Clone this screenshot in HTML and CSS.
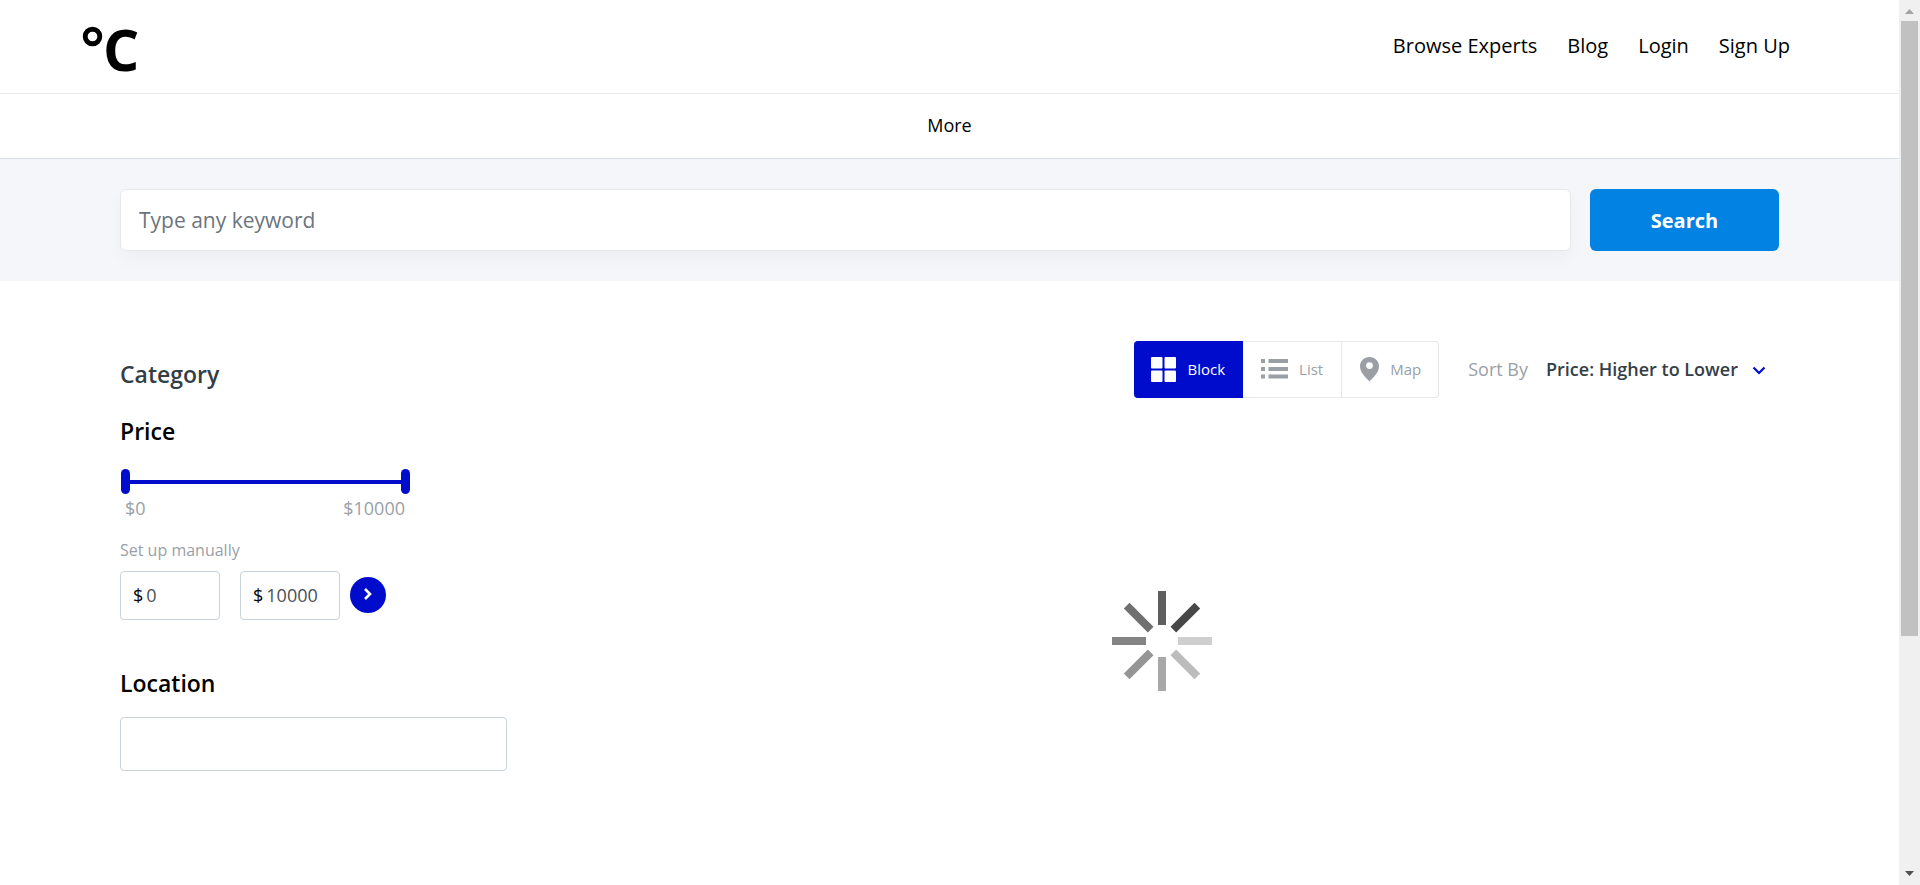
FILE: index.html
```html
<!DOCTYPE html>
<html lang="en">
<head>
<meta charset="utf-8">
<title>Browse Experts</title>
<link rel="stylesheet" href="styles.css">
</head>
<body>
<div class="viewport">
  <div class="page">
    <header class="header">
      <a class="logo" href="#" aria-label="°C">
        <svg width="23" height="25" viewBox="0 0 23 25"><circle cx="12.500" cy="12.500" r="7.300" fill="none" stroke="#000" stroke-width="4.900"/></svg>
        <span>C</span>
      </a>
      <nav class="nav">
        <a href="#">Browse Experts</a>
        <a href="#">Blog</a>
        <a href="#">Login</a>
        <a href="#">Sign Up</a>
      </nav>
    </header>
    <nav class="subnav"><a href="#">More</a></nav>
    <form class="search">
      <input class="search-input" type="text" placeholder="Type any keyword" aria-label="Keyword">
      <button class="search-button" type="button">Search</button>
    </form>
    <main class="content">
      <aside class="filters">
        <h2 class="title title-muted">Category</h2>
        <h2 class="title">Price</h2>
        <div class="slider">
          <input type="range" min="0" max="10000" value="0" aria-label="Minimum price">
          <input type="range" min="0" max="10000" value="10000" aria-label="Maximum price">
        </div>
        <div class="slider-labels"><span>$0</span><span>$10000</span></div>
        <p class="hint">Set up manually</p>
        <div class="manual">
          <label class="amount"><span>$</span><input type="text" value="0" aria-label="Price from"></label>
          <label class="amount"><span>$</span><input type="text" value="10000" aria-label="Price to"></label>
          <button class="apply" type="button" aria-label="Apply price">
            <svg width="10" height="14" viewBox="0 0 10 14"><path d="M2 2l5 5-5 5" fill="none" stroke="#fff" stroke-width="2.600"/></svg>
          </button>
        </div>
        <label class="title title-location" for="location">Location</label>
        <input class="location" id="location" type="text">
      </aside>
      <section class="results">
        <div class="toolbar">
          <div class="views">
            <button class="view view-active" type="button">
              <svg width="25" height="25" viewBox="0 0 25 25" fill="currentColor"><rect width="11.500" height="11.500" rx="1"/><rect x="13.500" width="11.500" height="11.500" rx="1"/><rect y="13.500" width="11.500" height="11.500" rx="1"/><rect x="13.500" y="13.500" width="11.500" height="11.500" rx="1"/></svg>
              Block
            </button>
            <button class="view" type="button">
              <svg width="27" height="20" viewBox="0 0 27 20" fill="currentColor"><path d="M0 0h4v4H0zM7.500 0H27v4H7.500zM0 8h4v4H0zM7.500 8H27v4H7.500zM0 15.500h4v4H0zM7.500 15.500H27v4H7.500z"/></svg>
              List
            </button>
            <button class="view" type="button">
              <svg width="19" height="25" viewBox="0 0 19 25" fill="currentColor"><path fill-rule="evenodd" d="M9.500 0C4.200 0 0 4.100 0 9.200 0 15.500 5.500 20 9.500 24.500 13.500 20 19 15.500 19 9.200 19 4.100 14.800 0 9.500 0zm0 5.200a3.400 3.400 0 1 1 0 6.800 3.400 3.400 0 0 1 0-6.800z"/></svg>
              Map
            </button>
          </div>
          <label class="sort-label" for="sort">Sort By</label>
          <div class="sort">
            <select id="sort"><option>Price: Higher to Lower</option></select>
            <svg width="14" height="9" viewBox="0 0 14 9"><path d="M1.500 1.500L7 7l5.500-5.500" fill="none" stroke="#000ccb" stroke-width="2.200"/></svg>
          </div>
        </div>
        <div class="loading">
          <svg width="100" height="100" viewBox="-50 -50 100 100" role="img" aria-label="Loading">
            <rect x="-4" y="-50" width="8" height="34" fill="#5f5f5f"/>
            <rect x="-4" y="-50" width="8" height="34" fill="#474747" transform="rotate(45)"/>
            <rect x="-4" y="-50" width="8" height="34" fill="#cfcfcf" transform="rotate(90)"/>
            <rect x="-4" y="-50" width="8" height="34" fill="#bcbcbc" transform="rotate(135)"/>
            <rect x="-4" y="-50" width="8" height="34" fill="#a8a8a8" transform="rotate(180)"/>
            <rect x="-4" y="-50" width="8" height="34" fill="#959595" transform="rotate(225)"/>
            <rect x="-4" y="-50" width="8" height="34" fill="#848484" transform="rotate(270)"/>
            <rect x="-4" y="-50" width="8" height="34" fill="#707070" transform="rotate(315)"/>
          </svg>
        </div>
      </section>
    </main>
  </div>
  <div class="scrollbar" aria-hidden="true">
    <svg width="21" height="21" viewBox="0 0 21 21"><path d="M6 14l4.500-5 4.500 5z" fill="#a3a3a3"/></svg>
    <div class="scroll-track"><div class="scroll-thumb"></div></div>
    <svg width="21" height="21" viewBox="0 0 21 21"><path d="M6 7l4.500 5L15 7z" fill="#505050"/></svg>
  </div>
</div>
</body>
</html>
```
FILE: styles.css
```css
* { box-sizing: border-box; }
body {
  margin: 0;
  font-family: "Open Sans", sans-serif;
  color: #000;
  background: #fff;
}
a { color: inherit; text-decoration: none; }
button, input, select { font: inherit; color: inherit; }
button { border: 0; padding: 0; cursor: pointer; }
svg { display: block; flex: none; }

.viewport { display: flex; height: 100vh; overflow: hidden; }
.page { flex: 1; min-width: 0; }

.header {
  display: flex;
  align-items: center;
  justify-content: space-between;
  height: 94px;
  padding: 0 109px 0 80px;
  border-bottom: 1px solid #e9e9eb;
}
.logo {
  display: flex;
  align-items: flex-start;
  padding-top: 5px;
  font-size: 57px;
  line-height: 60px;
  font-weight: 700;
}
.logo svg { margin-top: 5px; }
.nav { display: flex; gap: 30px; padding-bottom: 2px; font-size: 20px; line-height: 28px; }

.subnav {
  display: flex;
  align-items: center;
  justify-content: center;
  height: 65px;
  padding-bottom: 2px;
  font-size: 18px;
  border-bottom: 1px solid #d9dfe4;
}

.search {
  display: flex;
  gap: 19px;
  padding: 30px 120px;
  background: #f5f6fa;
}
.search-input {
  flex: 1;
  min-width: 0;
  height: 62px;
  padding: 0 18px;
  font-size: 21px;
  border: 1px solid #e7e8ea;
  border-radius: 6px;
  background: #fff;
  box-shadow: 0 8px 16px rgba(0, 0, 0, .03);
}
.search-input::placeholder { color: #6c757d; opacity: 1; }
.search-button {
  width: 189px;
  height: 62px;
  font-size: 20px;
  font-weight: 700;
  color: #fff;
  background: #0283e4;
  border-radius: 6px;
}

.content {
  display: grid;
  grid-template-columns: 387px 1fr;
  gap: 38px;
  padding: 60px 120px 0;
}
.filters { padding-top: 15px; }
.title {
  display: block;
  margin: 0 0 21px;
  font-size: 23px;
  line-height: 36px;
  font-weight: 600;
}
.title-muted { color: #343e47; }
.title + .slider { margin-top: -1px; }

.slider { position: relative; width: 289px; height: 25px; margin-left: 1px; }
.slider::before {
  content: "";
  position: absolute;
  inset: 11px 4px 10px;
  background: #000ccb;
}
.slider input {
  position: absolute;
  inset: 0;
  width: 100%;
  height: 25px;
  margin: 0;
  appearance: none;
  background: none;
  pointer-events: none;
}
.slider input::-webkit-slider-thumb {
  appearance: none;
  width: 9px;
  height: 25px;
  border-radius: 5px;
  background: #000ccb;
  pointer-events: auto;
}
.slider-labels {
  display: flex;
  justify-content: space-between;
  width: 290px;
  padding: 0 5px;
  font-size: 18px;
  line-height: 28px;
  color: #9a9fa6;
}
.hint { margin: 16px 0 9px; font-size: 16px; line-height: 24px; color: #9a9fa6; }
.manual { display: flex; align-items: center; }
.amount {
  display: flex;
  align-items: center;
  gap: 3px;
  width: 100px;
  height: 49px;
  margin-right: 20px;
  padding: 0 12px 2px;
  font-size: 18px;
  border: 1px solid #c9d1d9;
  border-radius: 4px;
}
.amount + .amount { margin-right: 10px; }
.amount input {
  flex: 1;
  min-width: 0;
  padding: 0;
  border: 0;
  background: none;
  color: #495057;
}
.apply {
  display: flex;
  align-items: center;
  justify-content: center;
  width: 36px;
  height: 36px;
  margin-bottom: 1px;
  padding-bottom: 3px;
  border-radius: 50%;
  background: #000ccb;
}
.title-location { margin: 45px 0 16px; }
.location {
  display: block;
  width: 100%;
  height: 54px;
  padding: 0 12px;
  border: 1px solid #c9d1d9;
  border-radius: 4px;
}

.toolbar { display: flex; align-items: center; justify-content: flex-end; }
.views { display: flex; margin-right: 29px; }
.view {
  display: flex;
  align-items: center;
  gap: 11px;
  height: 57px;
  padding: 0 18px 1px;
  font-size: 15px;
  color: #9a9fa6;
  background: #fff;
  border: 1px solid #e7e8ea;
  border-left: 0;
}
.view-active {
  color: #fff;
  background: #000ccb;
  border-color: #000ccb;
  padding: 0 17px 1px;
  border-radius: 4px 0 0 4px;
}
.view:last-child { border-radius: 0 4px 4px 0; padding: 0 17px 1px 18px; }
.sort-label { margin-right: 18px; padding-bottom: 2px; font-size: 18px; color: #9a9fa6; }
.sort { position: relative; padding: 0 13px 2px 0; }
.sort select {
  appearance: none;
  padding: 0 28px 0 0;
  border: 0;
  background: none;
  font-size: 18px;
  font-weight: 600;
  color: #343e47;
}
.sort svg { position: absolute; right: 13px; top: 50%; margin-top: -4px; }

.loading { display: flex; justify-content: center; padding-top: 193px; }

.scrollbar {
  display: flex;
  flex-direction: column;
  width: 21px;
  background: #f0f0f0;
}
.scroll-track { flex: 1; padding: 0 2px; }
.scroll-thumb { height: 73%; background: #c1c1c1; }
```
